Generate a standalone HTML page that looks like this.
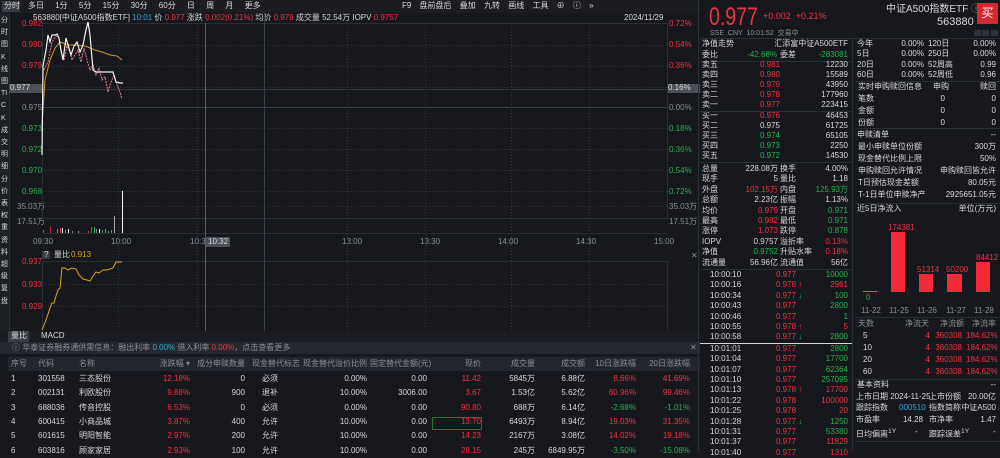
<!DOCTYPE html>
<html><head><meta charset="utf-8">
<style>
*{margin:0;padding:0;box-sizing:border-box}
body{width:1000px;height:451px;overflow:hidden;background:#16181d;font-family:"Liberation Sans","Noto Sans CJK SC",sans-serif;font-size:8px;color:#c9cbd0;position:relative}
.a{position:absolute;white-space:nowrap;line-height:10px}
.r{color:#f0313f}.g{color:#22b24c}.w{color:#d8d8d8}.y{color:#d8a521}.b{color:#38a3d1}.gr{color:#8b8e94}
.hl{position:absolute;height:1px;background:#2b2e35}
.vl{position:absolute;width:1px;background:#2b2e35}
</style></head><body>
<!-- toolbar -->
<div class="a" style="left:0;top:0;width:700px;height:13px;background:#1b1d22"></div>
<div class="a" style="left:2px;top:1px;width:18px;height:11px;background:#3a3d44"></div>
<div class="a w" style="left:4px;top:1px">分时</div>
<div class="a w" style="left:28px;top:1px;word-spacing:9px">多日 1分 5分 15分 30分 60分 日 周 月 更多</div>
<div class="a w" style="left:402px;top:1px;word-spacing:6px">F9 盘前盘后 叠加 九转 画线 工具 ⊕ ⓘ »</div>
<!-- left sidebar -->
<div class="a" style="left:0;top:13px;width:9px;height:318px;background:#1d2025"></div>
<div class="a w" style="left:1px;top:15px;width:8px;line-height:12.2px;white-space:normal;word-break:break-all;font-size:7px">分时图<br>K线图<br>TICK<br>成交明细<br>分价表<br>权重资料<br>超级复盘</div>
<div class="vl" style="left:9px;top:13px;height:318px"></div>
<!-- chart header -->
<div class="a w" style="left:33px;top:13px">563880[中证A500指数ETF] <span class="b">10:01</span> 价 <span class="r">0.977</span> 涨跌 <span class="r">0.002(0.21%)</span> 均价 <span class="r">0.979</span> 成交量 <span class="w">52.54万</span> IOPV <span class="r">0.9757</span></div>
<div class="a w" style="left:624px;top:13px">2024/11/29</div>
<!-- left axis -->
<div class="a r" style="left:22px;top:19px">0.982</div>
<div class="a r" style="left:22px;top:40px">0.980</div>
<div class="a r" style="left:22px;top:61px">0.979</div>
<div class="a" style="left:9px;top:84px;width:33px;height:9px;background:#4e5058"></div>
<div class="a w" style="left:10px;top:83px">0.977</div>
<div class="a gr" style="left:22px;top:103px">0.975</div>
<div class="a g" style="left:22px;top:124px">0.973</div>
<div class="a g" style="left:22px;top:145px">0.972</div>
<div class="a g" style="left:22px;top:166px">0.970</div>
<div class="a g" style="left:22px;top:187px">0.968</div>
<div class="a gr" style="left:17px;top:202px">35.03万</div>
<div class="a gr" style="left:17px;top:217px">17.51万</div>
<!-- right axis -->
<div class="a r" style="left:669px;top:19px">0.72%</div>
<div class="a r" style="left:669px;top:40px">0.54%</div>
<div class="a r" style="left:669px;top:61px">0.36%</div>
<div class="a" style="left:667px;top:84px;width:33px;height:9px;background:#4e5058"></div>
<div class="a w" style="left:668px;top:83px">0.16%</div>
<div class="a gr" style="left:669px;top:103px">0.00%</div>
<div class="a g" style="left:669px;top:124px">0.18%</div>
<div class="a g" style="left:669px;top:145px">0.36%</div>
<div class="a g" style="left:669px;top:166px">0.54%</div>
<div class="a g" style="left:669px;top:187px">0.72%</div>
<div class="a gr" style="left:669px;top:202px">35.03万</div>
<div class="a gr" style="left:669px;top:217px">17.51万</div>
<!-- time axis -->
<div class="a gr" style="left:33px;top:237px">09:30</div>
<div class="a gr" style="left:111px;top:237px">10:00</div>
<div class="a gr" style="left:190px;top:237px">10:30</div>
<div class="a" style="left:206px;top:237px;width:24px;height:10px;background:#4e5058"></div>
<div class="a w" style="left:208px;top:237px">10:32</div>
<div class="a gr" style="left:342px;top:237px">13:00</div>
<div class="a gr" style="left:420px;top:237px">13:30</div>
<div class="a gr" style="left:498px;top:237px">14:00</div>
<div class="a gr" style="left:576px;top:237px">14:30</div>
<div class="a gr" style="left:654px;top:237px">15:00</div>
<!-- lower pane labels -->
<div class="a" style="left:42px;top:251px;width:8px;height:8px;background:#3a3d44"></div>
<div class="a w" style="left:44px;top:250px">?</div>
<div class="a w" style="left:54px;top:250px">量比</div>
<div class="a y" style="left:71px;top:250px">0.913</div>
<div class="a r" style="left:22px;top:257px">0.937</div>
<div class="a r" style="left:22px;top:280px">0.933</div>
<div class="a r" style="left:22px;top:302px">0.929</div>
<div class="a gr" style="left:691px;top:251px">✕</div>
<svg class="a" style="left:0;top:0" width="700" height="331">
<g stroke="#2b2e35" fill="none">
<rect x="42.5" y="23.5" width="625" height="195"/>
<line x1="42" y1="218.5" x2="667" y2="218.5"/>
<line x1="42" y1="233.5" x2="667" y2="233.5"/>
<rect x="42.5" y="261.5" width="625" height="70"/>
<line x1="42" y1="107.5" x2="667" y2="107.5" stroke="#3a3d44"/>
<line x1="42" y1="89.5" x2="667" y2="89.5" stroke="#33363d"/>
<line x1="264.5" y1="13" x2="264.5" y2="331" stroke="#3a3d44"/>
<line x1="205.5" y1="23" x2="205.5" y2="331" stroke="#5a5d64"/>
</g>
<g stroke="#34373e" stroke-dasharray="1,2" fill="none">
<line x1="42" y1="45.5" x2="667" y2="45.5"/><line x1="42" y1="66.5" x2="667" y2="66.5"/>
<line x1="42" y1="87.5" x2="667" y2="87.5"/><line x1="42" y1="128.5" x2="667" y2="128.5"/>
<line x1="42" y1="149.5" x2="667" y2="149.5"/><line x1="42" y1="170.5" x2="667" y2="170.5"/>
<line x1="42" y1="191.5" x2="667" y2="191.5"/><line x1="42" y1="206.5" x2="667" y2="206.5"/>
<line x1="42" y1="284.5" x2="667" y2="284.5"/><line x1="42" y1="306.5" x2="667" y2="306.5"/>
<line x1="118.5" y1="23" x2="118.5" y2="331"/><line x1="197.5" y1="23" x2="197.5" y2="331"/>
<line x1="347.5" y1="23" x2="347.5" y2="331"/><line x1="425.5" y1="23" x2="425.5" y2="331"/>
<line x1="511.5" y1="23" x2="511.5" y2="331"/><line x1="589.5" y1="23" x2="589.5" y2="331"/>
</g>
<polyline fill="none" stroke="#c9952a" stroke-width="1" points="42,125 45,80 50,60 55,48 60,42 63,43 67,45 75,45 85,46 95,50 102,52 110,55 117,56 122,60"/>
<polyline fill="none" stroke="#e87d86" stroke-width="1" stroke-dasharray="2,1" points="44,70 48,62 52,42 56,36 59,38 61,52 64,60 67,46 70,52 72,60 75,55 78,50 81,62 84,48 87,60 90,70 93,65 96,75 99,68 102,80 105,77 108,92 111,82 114,75 117,85 120,92 122,99"/>
<polyline fill="none" stroke="#f2f2f2" stroke-width="1.2" points="42,155 43,66 46,50 48,35 50,42 52,35 55,35 57,34 59,38 61,50 63,60 66,38 69,48 71,55 74,46 77,42 80,52 83,45 86,30 88,22 90,35 93,70 96,72 100,72 103,72 107,72 110,72 113,72 116,82 120,83 123,83"/>
<g stroke-width="1">
<line x1="43.5" y1="233" x2="43.5" y2="230" stroke="#e8323c"/>
<line x1="50.5" y1="233" x2="50.5" y2="226" stroke="#9a2530"/>
<line x1="57.5" y1="233" x2="57.5" y2="229" stroke="#888"/>
<line x1="60.5" y1="233" x2="60.5" y2="228" stroke="#e8323c"/>
<line x1="62.5" y1="233" x2="62.5" y2="228" stroke="#f0f0f0"/>
<line x1="65.5" y1="233" x2="65.5" y2="230" stroke="#888"/>
<line x1="68.5" y1="233" x2="68.5" y2="229" stroke="#f0f0f0"/>
<line x1="72.5" y1="233" x2="72.5" y2="231" stroke="#888"/>
<line x1="78.5" y1="233" x2="78.5" y2="231" stroke="#888"/>
<line x1="88.5" y1="233" x2="88.5" y2="231" stroke="#e8323c"/>
<line x1="91.5" y1="233" x2="91.5" y2="227" stroke="#1d9e46"/>
<line x1="94.5" y1="233" x2="94.5" y2="227" stroke="#22b24c"/>
<line x1="96.5" y1="233" x2="96.5" y2="229" stroke="#888"/>
<line x1="99.5" y1="233" x2="99.5" y2="229" stroke="#f0f0f0"/>
<line x1="102.5" y1="233" x2="102.5" y2="230" stroke="#22b24c"/>
<line x1="105.5" y1="233" x2="105.5" y2="229" stroke="#888"/>
<line x1="108.5" y1="233" x2="108.5" y2="231" stroke="#888"/>
<line x1="111.5" y1="233" x2="111.5" y2="230" stroke="#888"/>
<line x1="114.5" y1="233" x2="114.5" y2="216" stroke="#aaa"/>
<line x1="122.5" y1="233" x2="122.5" y2="191" stroke="#f5f5f5"/>
</g>
<polyline fill="none" stroke="#d8a521" stroke-width="1" points="42,330 46,320 50,308 52,303 54,303 56,296 58,290 60,288 62,268 65,268 68,270 72,268 76,269 79,275 83,279 87,280 90,281 93,276 96,272 99,273 103,270 107,270 113,268 116,262 120,262 122,262"/>
</svg>
<!-- tabs -->
<div class="a" style="left:0;top:331px;width:700px;height:11px;background:#1b1d22"></div>
<div class="a" style="left:8px;top:331px;width:21px;height:11px;background:#3a3d44"></div>
<div class="a w" style="left:11px;top:331px">量比</div>
<div class="a w" style="left:41px;top:331px">MACD</div>
<div class="a" style="left:0;top:342px;width:700px;height:12px;background:#25282e"></div>
<div class="a gr" style="left:12px;top:343px">ⓘ 华泰证券融券通供需信息：融出利率 <span class="b">0.00%</span> 借入利率 <span class="r">0.00%</span>，点击查看更多</div>
<div class="a gr" style="left:690px;top:343px">✕</div>
<div class="a gr" style="left:350px;top:353px;font-size:6px">⌄</div>
<!-- table -->
<div class="a" style="left:8px;top:357px;width:692px;height:14px;background:#23262c"></div>
<div class="a gr" style="left:11px;top:359px">序号</div>
<div class="a gr" style="left:38px;top:359px">代码</div>
<div class="a gr" style="left:79px;top:359px">名称</div>
<div class="a gr" style="left:140px;top:359px;width:50px;text-align:right">涨跌幅 ▾</div>
<div class="a gr" style="left:195px;top:359px;width:50px;text-align:right">成分申赎数量</div>
<div class="a gr" style="left:252px;top:359px">现金替代标志</div>
<div class="a gr" style="left:300px;top:359px;width:67px;text-align:right">现金替代溢价比例</div>
<div class="a gr" style="left:370px;top:359px;width:57px;text-align:right">固定替代金额(元)</div>
<div class="a gr" style="left:440px;top:359px;width:41px;text-align:right">现价</div>
<div class="a gr" style="left:495px;top:359px;width:40px;text-align:right">成交量</div>
<div class="a gr" style="left:545px;top:359px;width:40px;text-align:right">成交额</div>
<div class="a gr" style="left:590px;top:359px;width:46px;text-align:right">10日涨跌幅</div>
<div class="a gr" style="left:640px;top:359px;width:50px;text-align:right">20日涨跌幅</div>
<div class="a" style="left:432px;top:417px;width:50px;height:13px;border:1px solid #1d7a3a"></div>
<!-- right panel -->
<div class="vl" style="left:698px;top:0;height:451px;background:#2e3138"></div>
<div class="a r" style="left:709px;top:4px;font-size:25px;line-height:26px;transform:scaleX(0.78);transform-origin:left top">0.977</div>
<div class="a r" style="left:763px;top:10px;font-size:9px;line-height:12px">+0.002 &nbsp;+0.21%</div>
<div class="a gr" style="left:710px;top:29px;font-size:7px">SSE &nbsp;CNY &nbsp;10:01:52 &nbsp;交易中</div>
<div class="a w" style="left:886px;top:4px;font-size:10px;line-height:12px">中证A500指数ETF <span class="gr">ⓘ</span></div>
<div class="a w" style="left:937px;top:16px;font-size:11px;line-height:12px">563880</div>
<div class="a" style="left:977px;top:3px;width:21px;height:21px;background:#d42a2f;color:#fff;font-size:12px;line-height:21px;text-align:center">买</div>
<div class="a" style="left:974px;top:30px;width:7px;height:6px;background:#2e3138"></div>
<div class="a" style="left:982px;top:30px;width:7px;height:6px;background:#2e3138"></div>
<div class="a" style="left:991px;top:30px;width:7px;height:6px;background:#2e3138"></div>
<div class="hl" style="left:700px;top:38px;width:300px"></div>
<div class="vl" style="left:852px;top:38px;height:413px"></div>
<svg class="a" style="left:855px;top:215px" width="145" height="110">
<line x1="8" y1="76.5" x2="22" y2="76.5" stroke="#22b24c"/>
<rect x="36" y="17" width="14" height="60" fill="#f52a3a"/>
<rect x="64" y="59" width="14" height="18" fill="#f52a3a"/>
<rect x="92" y="59" width="15" height="18" fill="#f52a3a"/>
<rect x="121" y="47" width="14" height="30" fill="#f52a3a"/>
</svg>
<script>
function A(x,y,t,c,w,r){var d=document.createElement('div');d.className='a '+(c||'');d.style.left=x+'px';d.style.top=y+'px';if(w){d.style.width=w+'px';}if(r)d.style.textAlign='right';d.innerHTML=t;document.body.appendChild(d);}
function L(x,y,w){var d=document.createElement('div');d.className='hl';d.style.left=x+'px';d.style.top=y+'px';d.style.width=w+'px';document.body.appendChild(d);}
var rows=[["1","301558","三态股份","12.18%","0","必须","0.00%","0.00","11.42","5845万","6.88亿","8.66%","41.69%"],
["2","002131","利欧股份","9.88%","900","退补","10.00%","3006.00","3.67","1.53亿","5.62亿","60.96%","99.46%"],
["3","688036","传音控股","6.53%","0","必须","0.00%","0.00","90.80","688万","6.14亿","-2.68%","-1.01%"],
["4","600415","小商品城","3.87%","400","允许","10.00%","0.00","13.70","6493万","8.94亿","19.03%","31.35%"],
["5","601615","明阳智能","2.97%","200","允许","10.00%","0.00","14.23","2167万","3.08亿","14.02%","19.18%"],
["6","603816","顾家家居","2.93%","100","允许","10.00%","0.00","28.15","245万","6849.95万","-3.50%","-15.08%"]];
rows.forEach(function(r,i){var y=374+i*14.3;
A(11,y,r[0],'w');A(38,y,r[1],'w');A(79,y,r[2],'w');A(140,y,r[3],'r',50,1);A(195,y,r[4],'w',50,1);A(262,y,r[5],'w');
A(300,y,r[6],'w',67,1);A(370,y,r[7],'w',57,1);A(440,y,r[8],'r',41,1);A(495,y,r[9],'w',40,1);A(545,y,r[10],'w',40,1);
A(590,y,r[11],r[11][0]=='-'?'g':'r',46,1);A(640,y,r[12],r[12][0]=='-'?'g':'r',50,1);});
A(702,39,'净值走势','w');A(760,39,'汇添富中证A500ETF','w',88,1);
A(702,50,'委比','w');A(735,50,'-42.68%','g',42,1);A(780,50,'委差','w');A(790,50,'-283081','g',58,1);
L(700,61,152);
var ob=[["卖五","0.981","12230","r"],["卖四","0.980","15589","r"],["卖三","0.979","43950","r"],["卖二","0.978","177960","r"],["卖一","0.977","223415","r"],
["买一","0.976","46453","r"],["买二","0.975","61725","w"],["买三","0.974","65105","g"],["买四","0.973","2250","g"],["买五","0.972","14530","g"]];
ob.forEach(function(o,i){var y=60+i*10+(i>4?1:0);A(702,y,o[0],'w');A(730,y,o[1],o[3],50,1);A(790,y,o[2],'w',58,1);});
L(700,111,152);L(700,162,152);
var st=[["总量","228.08万","w","换手","4.00%","w"],["现手","5","w","量比","1.18","w"],["外盘","102.15万","r","内盘","125.93万","g"],["总额","2.23亿","w","振幅","1.13%","w"],
["均价","0.979","r","开盘","0.971","g"],["最高","0.982","r","最低","0.971","g"],["涨停","1.073","r","跌停","0.878","g"],["IOPV","0.9757","w","溢折率","0.13%","r"],["净值","0.9752","g","升贴水率","0.18%","r"],["流通量","56.96亿","w","流通值","56亿","w"]];
st.forEach(function(s,i){var y=164+i*10.4;A(702,y,s[0],'w');A(730,y,s[1],s[2],48,1);A(780,y,s[3],'w');A(790,y,s[4],s[5],58,1);});
L(700,269,152);
var tk=[["10:00:10","0.977","10000","g",""],["10:00:16","0.978","2961","r","↑"],["10:00:34","0.977","100","g","↓"],["10:00:43","0.977","2800","g",""],["10:00:46","0.977","1","g",""],["10:00:55","0.978","5","r","↑"],["10:00:58","0.977","2800","g","↓"],
["10:01:01","0.977","2800","g",""],["10:01:04","0.977","17700","g",""],["10:01:07","0.977","62364","g",""],["10:01:10","0.977","257095","g",""],["10:01:13","0.978","17700","r","↑"],["10:01:22","0.978","100000","r",""],["10:01:25","0.978","20","r",""],["10:01:28","0.977","1250","g","↓"],["10:01:31","0.977","53380","g",""],["10:01:37","0.977","11829","r",""],["10:01:40","0.977","1310","r",""]];
tk.forEach(function(t,i){var y=270+i*10.4+(i>6?1:0);A(710,y,t[0],'w');A(776,y,t[1]+' <span class="'+(t[4]=='↑'?'r':'g')+'">'+t[4]+'</span>','r');A(790,y,t[2],t[3],58,1);});
var d=document.createElement('div');d.className='hl';d.style.cssText='left:700px;top:343px;width:152px;background:#d8d8d8';document.body.appendChild(d);
var pc=[["今年","0.00%","120日","0.00%"],["5日","0.00%","250日","0.00%"],["20日","0.00%","52周高","0.99"],["60日","0.00%","52周低","0.96"]];
pc.forEach(function(p,i){var y=39+i*10.3;A(857,y,p[0],'w');A(870,y,p[1],'w',54,1);A(928,y,p[2],'w');A(940,y,p[3],'w',56,1);});
L(855,81,145);
A(858,82,'实时申购赎回信息','w');A(933,82,'申购','w');A(967,82,'赎回','w',29,1);
[["笔数"],["金额"],["份额"]].forEach(function(p,i){var y=94+i*12;A(858,y,p[0],'w');A(900,y,'0','w',45,1);A(950,y,'0','w',46,1);});
L(855,128,145);
A(857,130,'申赎清单','w');A(960,130,'--','w',36,1);
[["最小申赎单位份额","300万"],["现金替代比例上限","50%"],["申购赎回允许情况","申购赎回皆允许"],["T日预估现金差额","80.05元"],["T-1日单位申赎净产","2925651.05元"]].forEach(function(p,i){var y=142+i*12;A(858,y,p[0],'w');A(920,y,p[1],'w',76,1);});
L(855,203,145);
A(857,204,'近5日净流入','w');A(940,204,'单位(万元)','w',56,1);
A(888,223,'174381','r');A(917,265,'51314','r');A(946,265,'50200','r');A(976,253,'84412','r');A(866,293,'0','g');
A(861,306,'11-22','gr');A(889,306,'11-25','gr');A(917,306,'11-26','gr');A(946,306,'11-27','gr');A(974,306,'11-28','gr');
L(855,317,145);
A(858,319,'天数','gr');A(905,319,'净流天','gr');A(940,319,'净流额','gr');A(972,319,'净流率','gr');
["5","10","20","60"].forEach(function(p,i){var y=331+i*12;A(863,y,p,'w');A(900,y,'4','r',30,1);A(932,y,'360308','r',30,1);A(966,y,'184.62%','r',30,1);});
L(855,379,145);
A(857,380,'基本资料','w');A(960,380,'--','w',36,1);
A(856,392,'上市日期 2024-11-25','w');A(929,392,'上市份额','w');A(960,392,'20.00亿','w',36,1);
A(856,403,'跟踪指数','w');A(899,403,'000510','b');A(929,403,'指数简称','w');A(960,403,'中证A500','w',36,1);
A(856,415,'市盈率','w');A(900,415,'14.28','w',23,1);A(929,415,'市净率','w');A(960,415,'1.47','w',36,1);
A(856,427,'日均偏离<sup>1Y</sup>','w');A(915,427,'-','w');A(929,427,'跟踪误差<sup>1Y</sup>','w');A(993,427,'-','w');
L(855,441,145);
</script>
</body></html>
